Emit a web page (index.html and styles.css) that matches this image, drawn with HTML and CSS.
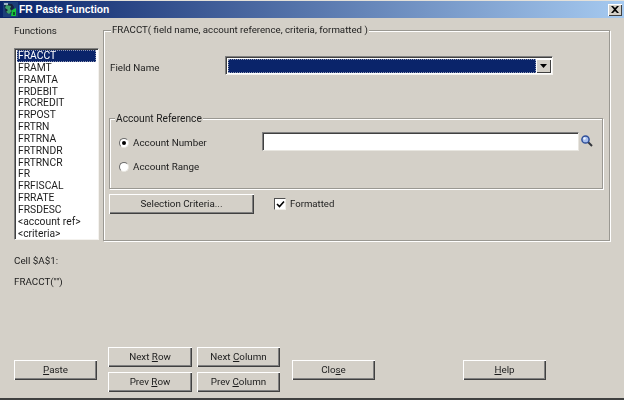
FILE: index.html
```html
<!DOCTYPE html>
<html lang="en">
<head>
<meta charset="utf-8">
<title>FR Paste Function</title>
<link rel="stylesheet" href="styles.css">
</head>
<body>
<div class="window">
  <div class="titlebar">
    <svg class="app-icon" width="15" height="15" viewBox="0 0 15 15">
      <rect x="0" y="0" width="15" height="15" fill="#1c3f78"/>
      <path d="M1 2h8l2 3-2 6H3z" fill="#17223c"/>
      <path d="M3 3l5 1-1 3 2 2-3 3-3-2 2-2-3-2z" fill="#3fa06a"/>
      <path d="M9 8l4-2v8H8z" fill="#18c63c"/>
      <path d="M10 10h2v3h-2z" fill="#0b5a24"/>
      <path d="M1 1h4v2H1z" fill="#9fb4c8"/>
    </svg>
    <span class="title-text">FR Paste Function</span>
    <span class="close-btn">
      <svg width="8" height="7" viewBox="0 0 8 7"><path d="M0 0h2l2 2 2-2h2L5 3.500 8 7H6L4 5 2 7H0l3-3.500z" fill="#000"/></svg>
    </span>
  </div>
  <div class="main">
    <div class="functions">
      <div class="functions-label">Functions</div>
      <ul class="list">
        <li class="list-item selected">FRACCT</li>
        <li class="list-item">FRAMT</li>
        <li class="list-item">FRAMTA</li>
        <li class="list-item">FRDEBIT</li>
        <li class="list-item">FRCREDIT</li>
        <li class="list-item">FRPOST</li>
        <li class="list-item">FRTRN</li>
        <li class="list-item">FRTRNA</li>
        <li class="list-item">FRTRNDR</li>
        <li class="list-item">FRTRNCR</li>
        <li class="list-item">FR</li>
        <li class="list-item">FRFISCAL</li>
        <li class="list-item">FRRATE</li>
        <li class="list-item">FRSDESC</li>
        <li class="list-item">&lt;account ref&gt;</li>
        <li class="list-item">&lt;criteria&gt;</li>
      </ul>
    </div>
    <fieldset class="group outer-group">
      <legend class="legend">FRACCT( field name, account reference, criteria, formatted )</legend>
      <div class="field-row">
        <span class="field-label">Field Name</span>
        <div class="combo">
          <div class="combo-value"></div>
          <span class="combo-arrow"><svg width="7" height="4" viewBox="0 0 7 4"><path d="M0 0h7L3.500 4z" fill="#000"/></svg></span>
        </div>
      </div>
      <fieldset class="group inner-group">
        <legend class="legend">Account Reference</legend>
        <div class="account-grid">
          <div class="radio-row">
            <span class="radio checked"></span>
            <span>Account Number</span>
          </div>
          <div class="search">
            <div class="text-input"></div>
            <svg class="magnifier" width="12" height="12" viewBox="0 0 12 12">
              <path d="M7 7l4 4" stroke="#33363c" stroke-width="2"/>
              <circle cx="4.500" cy="4.500" r="3.600" fill="#a9c0ee" stroke="#2f4f9a" stroke-width="1.500"/>
              <circle cx="3.500" cy="3.500" r="1.200" fill="#eef4ff"/>
            </svg>
          </div>
          <div class="radio-row">
            <span class="radio"></span>
            <span>Account Range</span>
          </div>
        </div>
      </fieldset>
      <div class="criteria-row">
        <button class="btn criteria-btn" type="button">Selection Criteria...</button>
        <span class="checkbox">
          <svg width="9" height="9" viewBox="0 0 9 9"><path d="M1 4l2.500 2.500L8 1.500" fill="none" stroke="#000" stroke-width="1.600"/></svg>
        </span>
        <span class="check-label">Formatted</span>
      </div>
    </fieldset>
  </div>
  <div class="status">
    <div>Cell $A$1:</div>
    <div>FRACCT("")</div>
  </div>
  <div class="actions">
    <button class="btn" type="button"><u>P</u>aste</button>
    <div class="nav-grid">
      <button class="btn" type="button">Next <u>R</u>ow</button>
      <button class="btn" type="button">Next <u>C</u>olumn</button>
      <button class="btn" type="button">Prev <u>R</u>ow</button>
      <button class="btn" type="button">Prev <u>C</u>olumn</button>
    </div>
    <button class="btn" type="button">Clo<u>s</u>e</button>
    <button class="btn help-btn" type="button"><u>H</u>elp</button>
  </div>
</div>
</body>
</html>
```
FILE: styles.css
```css
* { box-sizing: border-box; }
html, body { margin: 0; padding: 0; }
body {
  width: 624px;
  height: 400px;
  overflow: hidden;
  background: #d4d0c8;
  font-family: Roboto, "Liberation Sans", Arial, sans-serif;
  font-size: 9.8px;
  line-height: 12px;
  color: #1c1c1c;
}
.window {
  height: 400px;
  display: flex;
  flex-direction: column;
  border-top: 1px solid #e4e1da;
  border-bottom: 2px solid #404040;
  filter: blur(0.3px);
}
.titlebar {
  height: 17px;
  flex: none;
  display: flex;
  align-items: center;
  padding: 0 2px 0 3px;
  background: linear-gradient(90deg, #0a246a, #a6caf0);
}
.app-icon { flex: none; }
.title-text {
  margin-left: 1px;
  flex: 1;
  color: #fff;
  font-weight: bold;
  font-family: "Liberation Sans", Arial, sans-serif;
  font-size: 10.3px;
}
.close-btn {
  width: 14px;
  height: 12px;
  display: flex;
  align-items: center;
  justify-content: center;
  background: #d4d0c8;
  box-shadow: inset 1px 1px 0 #fff, inset -1px -1px 0 #404040;
}
.main {
  flex: none;
  display: flex;
  padding: 5px 14px 0;
  align-items: flex-start;
}
.functions { width: 85px; flex: none; margin-right: 4px; }
.functions-label { height: 14px; line-height: 16px; }
.list {
  list-style: none;
  margin: 11px 0 0;
  padding: 1px 2px;
  height: 192px;
  background: #fff;
  font-size: 10.3px;
  border-top: 1px solid #808080;
  border-left: 1px solid #808080;
  border-right: 1px solid #f4f2ee;
  border-bottom: 1px solid #f4f2ee;
  box-shadow: inset 1px 1px 0 #404040;
  overflow: hidden;
}
.list-item { height: 11.850px; line-height: 11.850px; padding-left: 1px; white-space: nowrap; }
.list-item.selected {
  background: #0a246a;
  color: #fff;
  outline: 1px dotted #8c94b0;
  outline-offset: -1px;
}
.group {
  margin: 0;
  min-width: 0;
  border: 1px solid #9a9892;
  box-shadow: inset 1px 1px 0 #fff, 1px 1px 0 #fff;
}
.legend { padding: 0 1px; margin-left: 2px; line-height: 14px; background: #d4d0c8; font-size: 9.7px; }
.outer-group {
  width: 507px;
  height: 218px;
  padding: 0 6px 0 5px;
}
.field-row { display: flex; align-items: center; margin-top: 19px; }
.field-label { width: 116px; flex: none; padding: 5px 0 0 1px; }
.combo {
  width: 328px;
  height: 19px;
  display: flex;
  padding: 2px 1px 1px 2px;
  background: #fff;
  border-top: 1px solid #808080;
  border-left: 1px solid #808080;
  border-right: 1px solid #f4f2ee;
  border-bottom: 1px solid #f4f2ee;
  box-shadow: inset 1px 1px 0 #404040;
}
.combo-value {
  flex: 1;
  background: #0a246a;
  outline: 1px dotted #8c94b0;
  outline-offset: -1px;
}
.combo-arrow {
  width: 15px;
  flex: none;
  display: flex;
  align-items: center;
  justify-content: center;
  background: #d4d0c8;
  box-shadow: inset 1px 1px 0 #fff, inset -1px -1px 0 #404040;
}
.inner-group {
  margin-top: 35px;
  width: 494px;
  height: 79px;
  padding: 0;
}
.inner-group .legend { margin-left: 5px; padding-top: 2px; font-size: 10.2px; }
.account-grid {
  display: grid;
  grid-template-columns: 143px 1fr;
  grid-auto-rows: 24px;
  align-items: center;
  margin-top: 3px;
  padding-left: 9px;
}
.radio-row { display: flex; align-items: center; gap: 4px; padding-top: 3px; }
.radio {
  width: 10px;
  height: 10px;
  flex: none;
  border-radius: 50%;
  background: #fff;
  border: 1px solid #6a6a6a;
  border-right-color: #e8e6e0;
  border-bottom-color: #e8e6e0;
  display: flex;
  align-items: center;
  justify-content: center;
}
.radio.checked::after {
  content: "";
  width: 4px;
  height: 4px;
  border-radius: 50%;
  background: #000;
}
.search { display: flex; align-items: center; gap: 2px; }
.text-input {
  width: 317px;
  height: 19px;
  flex: none;
  background: #fff;
  border-top: 1px solid #808080;
  border-left: 1px solid #808080;
  border-right: 1px solid #e8e6e0;
  border-bottom: 1px solid #e8e6e0;
  box-shadow: inset 1px 1px 0 #404040;
}
.magnifier { flex: none; }
.criteria-row { display: flex; align-items: center; margin-top: 5px; }
.check-label { font-size: 9.6px; }
.checkbox {
  width: 12px;
  height: 12px;
  flex: none;
  margin-right: 4px;
  display: flex;
  align-items: center;
  justify-content: center;
  background: #fff;
  border-top: 1px solid #505050;
  border-left: 1px solid #505050;
  border-right: 1px solid #f0eee8;
  border-bottom: 1px solid #f0eee8;
}
.btn {
  width: 83px;
  height: 20px;
  padding: 0;
  border: 0;
  border-radius: 0;
  background: #d4d0c8;
  font: inherit;
  color: inherit;
  box-shadow: inset 1px 1px 0 #fff, inset -1px -1px 0 #404040, inset -2px -2px 0 #808080;
}
.criteria-btn { width: 145px; margin-right: 20px; white-space: nowrap; }
.status { flex: none; padding: 14px 14px 0; display: flex; flex-direction: column; gap: 9px; }
.actions { flex: none; display: flex; align-items: center; padding: 0 14px; margin-top: 59px; }
.nav-grid {
  display: grid;
  grid-template-columns: 84px 83px;
  grid-auto-rows: 20px;
  column-gap: 5px;
  row-gap: 5px;
  margin: 0 12px 0 11px;
}
.nav-grid .btn { width: auto; }
.help-btn { margin-left: 88px; }
```
